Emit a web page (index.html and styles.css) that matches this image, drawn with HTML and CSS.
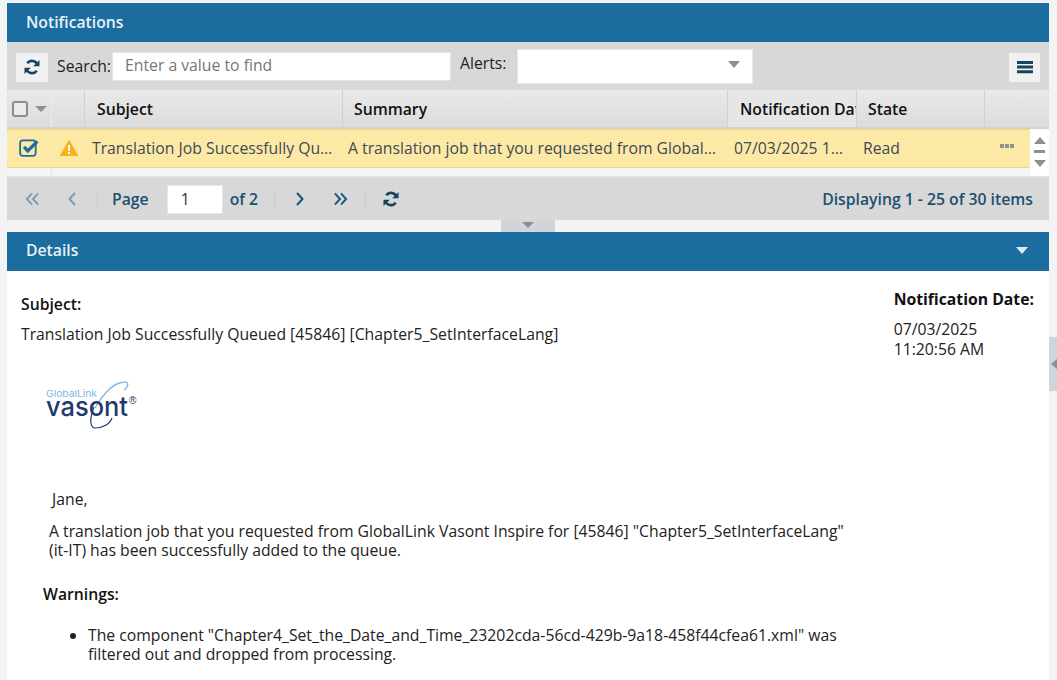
FILE: index.html
```html
<!DOCTYPE html>
<html lang="en">
<head>
<meta charset="utf-8">
<title>Notifications</title>
<link rel="stylesheet" href="styles.css">
</head>
<body>
<div class="page">
  <main class="main">
    <header class="panel-head">Notifications</header>
    <div class="toolbar">
      <button class="tool-btn"><svg class="ico" viewBox="0 0 16 16"><use href="#sync"/></svg></button>
      <label class="search-label">Search:</label>
      <div class="input search-input">Enter a value to find</div>
      <label class="alerts-label">Alerts:</label>
      <div class="input alerts-input"><span class="caret"></span></div>
      <button class="tool-btn menu-btn"><svg class="ico" viewBox="0 0 16 16"><path d="M0 2h16v3H0zM0 6.6h16v3H0zM0 11.2h16v3H0z" fill="#17435f"/></svg></button>
    </div>
    <div class="grid-head">
      <div class="hc hc-check"><span class="checkbox"></span><span class="caret small"></span></div>
      <div class="hc hc-icon"></div>
      <div class="hc hc-subject">Subject</div>
      <div class="hc hc-summary">Summary</div>
      <div class="hc hc-date">Notification Date</div>
      <div class="hc hc-state">State</div>
      <div class="hc hc-rest"></div>
    </div>
    <div class="grid-body">
      <div class="rows">
        <div class="row">
          <div class="c c-check"><svg class="check" viewBox="0 0 18 17"><rect x="1" y="2" width="14" height="14" rx="2.5" fill="none" stroke="#1b6c9f" stroke-width="1.6"/><path d="M4.5 8l3.4 3.6L16.5 3" fill="none" stroke="#1b6c9f" stroke-width="3"/></svg></div>
          <div class="c c-icon"><svg class="warn" viewBox="0 0 18 16"><path d="M9 .5L17.6 15.5H.4z" fill="#f5b21a" stroke="#f5b21a" stroke-linejoin="round"/><path d="M8 5h2v6H8zM8 12h2v2H8z" fill="#fff"/></svg></div>
          <div class="c c-subject">Translation Job Successfully Queued [45846]</div>
          <div class="c c-summary">A translation job that you requested from GlobalLink Vasont Inspire</div>
          <div class="c c-date">07/03/2025 11:20:56 AM</div>
          <div class="c c-state">Read</div>
          <div class="c c-more"><span></span><span></span><span></span></div>
        </div>
        <div class="row-empty"><div class="empty-check"></div></div>
      </div>
      <div class="scroller">
        <span class="up"></span><span class="bar"></span><span class="down"></span>
      </div>
    </div>
    <div class="pager">
      <svg class="pg first" viewBox="0 0 16 14"><path d="M7.5 1L2 7l5.500 6M14 1L8.500 7l5.500 6" fill="none" stroke="#7f9bb0" stroke-width="2"/></svg>
      <svg class="pg prev" viewBox="0 0 10 14"><path d="M8 1L2.500 7 8 13" fill="none" stroke="#7f9bb0" stroke-width="2"/></svg>
      <span class="sep sep-a"></span>
      <span class="pg-text page-word">Page</span>
      <div class="page-box">1</div>
      <span class="pg-text of-word">of 2</span>
      <span class="sep sep-b"></span>
      <svg class="pg next" viewBox="0 0 10 14"><path d="M2 1l5.500 6L2 13" fill="none" stroke="#17537a" stroke-width="2"/></svg>
      <svg class="pg last" viewBox="0 0 16 14"><path d="M2 1l5.500 6L2 13M8.500 1L14 7l-5.500 6" fill="none" stroke="#17537a" stroke-width="2"/></svg>
      <span class="sep sep-c"></span>
      <svg class="pg sync" viewBox="0 0 16 16"><use href="#sync"/></svg>
      <span class="pg-text displaying">Displaying 1 - 25 of 30 items</span>
    </div>
    <div class="splitter"><div class="split-handle"><span class="caret small"></span></div></div>
    <header class="panel-head details-head">Details<span class="caret white"></span></header>
    <section class="details">
      <div class="meta">
        <div class="meta-left">
          <div class="strong">Subject:</div>
          <div class="subject-text">Translation Job Successfully Queued [45846] [Chapter5_SetInterfaceLang]</div>
        </div>
        <div class="meta-right">
          <div class="strong">Notification Date:</div>
          <div class="date-text">07/03/2025<br>11:20:56 AM</div>
        </div>
      </div>
      <svg class="logo" viewBox="0 0 95 50">
        <path d="M51 29C58 17 68 4 80 3C85 2 85 7 80 11" fill="none" stroke="#7db8e6" stroke-width="1.300"/>
        <path d="M50 28C46 38 45 48 51 49C59 49 66 45 68 39" fill="none" stroke="#1f3a6e" stroke-width="1.200"/>
        <text class="logo-top" x="2" y="18" textLength="51" lengthAdjust="spacingAndGlyphs">GlobalLink</text>
        <text class="logo-main" x="2" y="37" textLength="82" lengthAdjust="spacingAndGlyphs">vasont</text>
        <text class="logo-reg" x="85" y="25">®</text>
      </svg>
      <div class="message">
        <p class="greeting">Jane,</p>
        <p class="intro">A translation job that you requested from GlobalLink Vasont Inspire for [45846] "Chapter5_SetInterfaceLang" (it-IT) has been successfully added to the queue.</p>
        <p class="warnings">Warnings:</p>
        <ul class="warn-list">
          <li>The component "Chapter4_Set_the_Date_and_Time_23202cda-56cd-429b-9a18-458f44cfea61.xml" was filtered out and dropped from processing.</li>
        </ul>
      </div>
    </section>
  </main>
  <aside class="side"><div class="side-handle"><span class="side-arrow"></span></div></aside>
</div>
<svg class="defs" width="0" height="0"><defs>
  <g id="sync"><path d="M13.800 6.500A6 6 0 0 0 3.200 4.300" fill="none" stroke="#17435f" stroke-width="2.600"/><path d="M15.500 1v6.300H9.200z" fill="#17435f"/><path d="M2.200 9.500A6 6 0 0 0 12.800 11.700" fill="none" stroke="#17435f" stroke-width="2.600"/><path d="M.5 15V8.700h6.300z" fill="#17435f"/></g>
</defs></svg>
</body>
</html>
```
FILE: styles.css
```css
* { box-sizing: border-box; }
html, body { margin: 0; height: 100%; overflow: hidden; }
body { background: #f3f3f3; font-family: "Open Sans", "Liberation Sans", sans-serif; font-size: 15.75px; color: #222; }
.page { display: flex; height: 680px; padding: 3px 0 0 7px; }
.main { width: 1042px; flex: none; display: flex; flex-direction: column; }
.side { flex: 1; position: relative; }
.side-handle { margin-top: 334px; height: 54px; background: #ced6dc; display: flex; align-items: center; }
.side-arrow { width: 0; height: 0; margin-left: 2px; border: 5px solid transparent; border-left: 0; border-right: 6px solid #8f8f8f; }
.defs { position: absolute; }

.panel-head { height: 39px; flex: none; background: #1b6c9f; color: #e9f1f6; font-weight: 600; font-size: 15.75px; padding: 0 0 2px 19px; display: flex; justify-content: space-between; align-items: center; }
.details-head { padding-bottom: 3px; }

.toolbar { height: 48px; flex: none; background: #d8d8d8; display: flex; align-items: center; padding: 0 9px; }
.tool-btn { width: 32px; height: 29px; padding: 0; border: 0; background: #f1f1f1; display: flex; align-items: center; justify-content: center; }
.toolbar > .tool-btn:first-child { margin-top: 2px; }
.menu-btn { margin-left: auto; width: 31px; margin-top: 2px; }
.ico { width: 16px; height: 16px; }
.search-label { margin-left: 9px; margin-top: 0; }
.input { background: #fff; border: 1px solid #e4e4e4; color: #777; }
.search-input { width: 339px; height: 29px; margin-left: 1px; padding-left: 12px; line-height: 25px; margin-top: 1px; }
.alerts-label { margin-left: 9px; margin-top: -7px; }
.alerts-input { width: 236px; height: 35px; margin-left: 10px; border-color: #e8e8e8; position: relative; display: flex; justify-content: flex-end; padding: 11px 12px 0 0; }
.caret { display: block; width: 0; height: 0; border: 6px solid transparent; border-top: 7px solid #8f8f8f; border-bottom: 0; }
.caret.small { border-width: 6px 6px 0; }
.caret.white { border-top-color: #dfe9f0; margin-right: 21px; }

.grid-head { height: 39px; flex: none; display: flex; background: linear-gradient(#e9e9e9, #dcdcdc); border-bottom: 2px solid #d3d3d3; font-weight: 600; color: #111; line-height: 38px; }
.hc { height: 100%; padding-left: 12px; border-right: 1px solid #d0d0d0; white-space: nowrap; overflow: hidden; flex: none; }
.hc-check { width: 45px; padding-left: 5px; display: flex; align-items: center; gap: 7px; border-right-color: #ececec; }
.checkbox { width: 16px; height: 16px; flex: none; border: 2px solid #8d8d8d; border-radius: 3px; background: #ececec; }
.hc-icon { width: 33px; }
.hc-subject { width: 258px; }
.hc-summary { width: 385px; padding-left: 11px; }
.hc-date { width: 129px; background: #e6e6e6; }
.hc-state { width: 128px; padding-left: 11px; }
.hc-rest { flex: 1; border-right: 0; }

.grid-body { height: 49px; flex: none; display: flex; background: #fff; border-bottom: 2px solid #e3e3e3; }
.rows { flex: 1; min-width: 0; background: #f5f5f5; }
.row { height: 39px; display: flex; align-items: center; background: #fde9a6; border-bottom: 1px solid #f1d773; border-top: 1px solid #f1d773; color: #3d4a55; padding-bottom: 2px; }
.c { flex: none; white-space: nowrap; overflow: hidden; text-overflow: ellipsis; padding: 0 6px; }
.c-check { width: 45px; height: 100%; padding: 0 0 0 12px; display: flex; align-items: center; border-right: 1px solid #f6e7b5; }
.check { width: 20px; height: 19px; }
.c-icon { width: 33px; padding: 0 0 0 8px; display: flex; }
.warn { width: 18px; height: 16px; }
.c-subject { width: 257px; padding-left: 7px; padding-right: 8px; }
.c-summary { width: 386px; }
.c-date { width: 129px; }
.c-state { width: 129px; }
.c-more { flex: 1; display: flex; gap: 1px; padding: 0 0 3px 14px; overflow: visible; }
.c-more span { width: 4px; height: 4px; background: #8f8f8f; }
.row-empty { height: 8px; }
.empty-check { width: 45px; height: 100%; border-right: 1px solid #e8e8e8; }
.scroller { width: 19px; flex: none; display: flex; flex-direction: column; align-items: center; padding-top: 8px; }
.up { width: 0; height: 0; border: 6px solid transparent; border-top: 0; border-bottom: 7px solid #8f8f8f; }
.down { width: 0; height: 0; border: 6px solid transparent; border-bottom: 0; border-top: 7px solid #8f8f8f; }
.bar { width: 11px; height: 3px; background: #8f8f8f; margin: 6px 0 7px; }

.pager { height: 42px; flex: none; background: #d8d8d8; display: flex; align-items: center; color: #1c4f70; font-weight: 600; padding-left: 18px; }
.pg { flex: none; }
.first, .last { width: 15px; height: 14px; }
.prev, .next { width: 10px; height: 14px; }
.prev { margin-left: 27px; }
.sep { width: 1px; height: 20px; background: #c3cdd4; flex: none; }
.sep-a { margin-left: 20px; }
.page-word { margin-left: 14px; }
.page-box { width: 56px; height: 29px; margin-left: 18px; padding-left: 13px; background: #fff; border: 1px solid #e6e6e6; color: #333; font-weight: 400; line-height: 27px; }
.of-word { margin-left: 7px; }
.sep-b { margin-left: 16px; }
.next { margin-left: 20px; }
.last { margin-left: 28px; }
.sep-c { margin-left: 17px; }
.sync { width: 16px; height: 16px; margin-left: 17px; }
.displaying { margin-left: auto; margin-right: 16px; }

.splitter { height: 12px; flex: none; display: flex; justify-content: center; }
.split-handle { width: 54px; height: 100%; background: #ced6dc; display: flex; justify-content: center; padding-top: 2px; }

.details { flex: 1; background: #fff; overflow: hidden; }
.meta { display: flex; justify-content: space-between; padding: 17px 15px 0 14px; height: 108px; }
.strong { font-weight: 700; color: #111; }
.meta-left .strong { font-weight: 600; }
.subject-text { margin-top: 8px; }
.meta-left { padding-top: 5px; }
.date-text { margin-top: 9px; line-height: 20px; }
.logo { display: block; width: 95px; height: 50px; margin: 0 0 0 37px; }
.logo-top { font-family: "Inter", sans-serif; font-size: 9.500px; fill: #7db8e6; }
.logo-main { font-family: "Inter", sans-serif; font-size: 27px; font-weight: 500; fill: #1f3a6e; }
.logo-reg { font-family: "Liberation Sans", sans-serif; font-size: 10px; fill: #1f3a6e; }
.message { width: 853px; padding: 0 0 0 36px; line-height: 19px; }
.message p { margin: 0; }
.greeting { padding-left: 9px; }
.message .greeting { margin-top: 61px; }
.message .intro { margin-top: 13px; padding-left: 6px; }
.message .warnings { margin-top: 25px; font-weight: 600; color: #111; }
.warn-list { margin: 22px 0 0; padding-left: 45px; }
```
